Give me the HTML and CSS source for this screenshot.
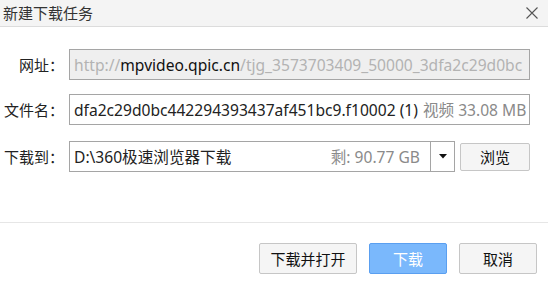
FILE: index.html
```html
<!DOCTYPE html>
<html lang="zh">
<head>
<meta charset="utf-8">
<link rel="stylesheet" href="styles.css">
</head>
<body>
<div class="dialog">
  <div class="titlebar">
    <span class="title">新建下载任务</span>
    <span class="close"><svg width="12" height="12" viewBox="0 0 12 12"><path d="M0.5 0.5L11.5 11.5M11.5 0.5L0.5 11.5" stroke="#555" stroke-width="1.1" fill="none"/></svg></span>
  </div>
  <div class="form">
    <div class="row row-url">
      <label class="label">网址：</label>
      <div class="field field-disabled"><span class="muted">http://</span><span class="domain">mpvideo.qpic.cn</span><span class="muted">/tjg_3573703409_50000_3dfa2c29d0bc</span></div>
    </div>
    <div class="row row-name">
      <label class="label">文件名：</label>
      <div class="field field-name"><span class="name">dfa2c29d0bc442294393437af451bc9.f10002 (1)</span><span class="info">视频 33.08 MB</span></div>
    </div>
    <div class="row row-dir">
      <label class="label">下载到：</label>
      <div class="field field-dir">
        <span class="path">D:\360极速浏览器下载</span>
        <span class="free">剩: 90.77 GB</span>
        <span class="drop"><svg width="8" height="5" viewBox="0 0 8 5"><path d="M0 0H8L4 4.5Z" fill="#111"/></svg></span>
      </div>
      <button class="btn btn-browse">浏览</button>
    </div>
  </div>
  <div class="footer">
    <button class="btn btn-wide">下载并打开</button>
    <button class="btn btn-primary">下载</button>
    <button class="btn">取消</button>
  </div>
</div>
</body>
</html>
```
FILE: styles.css
```css
* { box-sizing: border-box; }
html, body { margin: 0; padding: 0; background: #fff; }
body {
  width: 548px;
  height: 293px;
  overflow: hidden;
  font-family: "Segoe UI", "Noto Sans", "Noto Sans CJK SC", sans-serif;
  font-size: 15px;
  color: #222;
}
.dialog { display: flex; flex-direction: column; height: 293px; }
.titlebar {
  height: 27px;
  background: #f4f4f4;
  border-bottom: 1px solid #dcdcdc;
  display: flex;
  align-items: center;
  justify-content: space-between;
  padding: 0 10px 0 3px;
}
.title { font-size: 15px; color: #333; line-height: 1; }
.close { display: flex; }
.form {
  display: flex;
  flex-direction: column;
  padding: 22px 18px 0 0;
  height: 196px;
  border-bottom: 1px solid #e6e6e6;
}
.row { display: flex; align-items: center; height: 31px; }
.row-name { margin-top: 14px; }
.row-dir { margin-top: 16px; }
.label {
  width: 69px;
  flex: none;
  text-align: right;
  padding-right: 5px;
  color: #222;
  white-space: nowrap;
}
.field {
  flex: 1;
  min-width: 0;
  height: 31px;
  border: 1px solid #a5a5a5;
  display: flex;
  align-items: center;
  padding: 0 3px 0 4px;
  white-space: nowrap;
  overflow: hidden;
  background: #fff;
  font-size: 15.6px;
}
.field-disabled { background: #efefef; }
.muted { color: #b3b3b3; }
.domain { color: #111; }
.field-name { justify-content: space-between; }
.name { color: #222; }
.info { color: #8a8a8a; margin-left: 5px; }
.field-dir { padding-right: 0; }
.path { flex: 1; color: #222; }
.free { color: #8a8a8a; padding-right: 10px; }
.drop {
  width: 24px;
  height: 29px;
  border-left: 1px solid #a5a5a5;
  display: flex;
  align-items: center;
  justify-content: center;
}
.btn {
  font-family: inherit;
  font-size: 15px;
  color: #111;
  background: #f5f5f5;
  border: 1px solid #c6c6c6;
  border-radius: 2px;
  height: 31px;
  width: 78px;
  padding: 0;
}
.btn-browse { width: 70px; height: 28px; margin-left: 5px; }
.footer {
  display: flex;
  justify-content: flex-end;
  gap: 12px;
  padding: 20px 11px 0 0;
}
.btn-wide { width: 98px; }
.btn-primary { background: #7ab8fc; border-color: #5a9ff0; color: #fff; }
```
